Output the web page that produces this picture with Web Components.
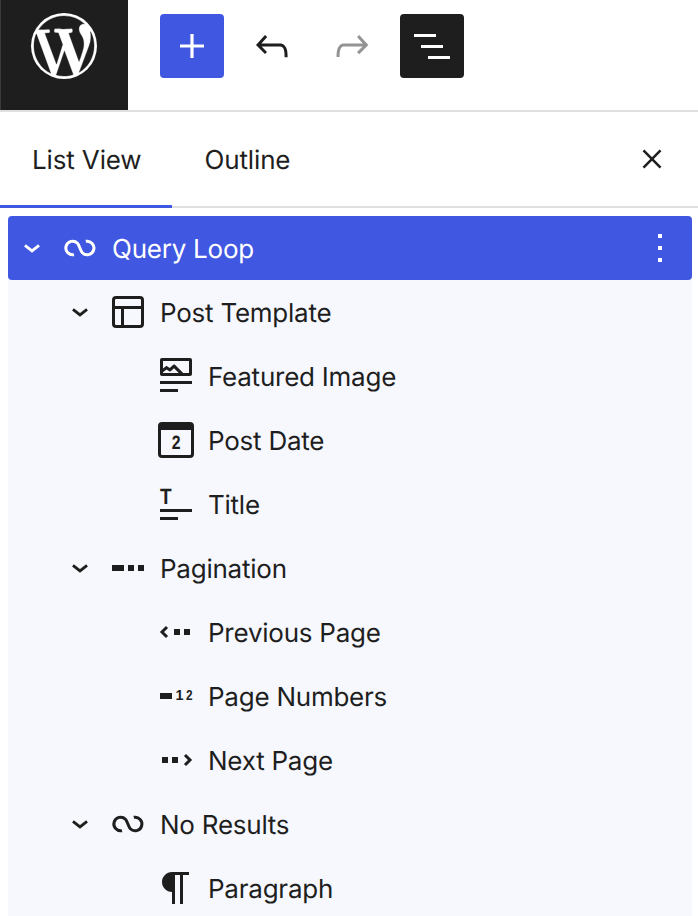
<!DOCTYPE html>
<html>
<head>
<meta charset="utf-8">
<style>
  html, body { margin: 0; height: 100%; overflow: hidden; background: #fff; }
  body { font-family: Inter, "Liberation Sans", sans-serif; color: #1e1e1e; text-rendering: geometricPrecision; letter-spacing: -0.24px; }
</style>
</head>
<body>
<editor-toolbar>
  <tool-button icon="plus" variant="primary"></tool-button>
  <tool-button icon="undo"></tool-button>
  <tool-button icon="redo" variant="disabled"></tool-button>
  <tool-button icon="listview" variant="dark"></tool-button>
</editor-toolbar>
<panel-tabs>
  <tab-item active>List View</tab-item>
  <tab-item>Outline</tab-item>
</panel-tabs>
<block-list>
  <block-row level="1" icon="loop" expanded selected>Query Loop</block-row>
  <block-row level="2" icon="layout" expanded>Post Template</block-row>
  <block-row level="3" icon="image">Featured Image</block-row>
  <block-row level="3" icon="date">Post Date</block-row>
  <block-row level="3" icon="title">Title</block-row>
  <block-row level="2" icon="pagination" expanded>Pagination</block-row>
  <block-row level="3" icon="previous">Previous Page</block-row>
  <block-row level="3" icon="numbers">Page Numbers</block-row>
  <block-row level="3" icon="next">Next Page</block-row>
  <block-row level="2" icon="loop" expanded>No Results</block-row>
  <block-row level="3" icon="paragraph">Paragraph</block-row>
</block-list>

<script>
  const digit = 'font-family="Liberation Sans" font-weight="700"';
  // all icons are on the 24 unit grid
  const ICONS = {
    plus: '<path d="M18 11.2h-5.2V6h-1.6v5.2H6v1.6h5.2V18h1.6v-5.2H18z"/>',
    undo: '<path d="M18.3 11.7c-.6-.6-1.4-.9-2.3-.9H6.7l2.9-3.3-1.1-1-4.5 5L8.5 16l1-1-2.7-2.7H16c.5 0 .9.2 1.3.5 1 1 1 3.4 1 4.5v.3h1.5v-.2c0-1.5 0-4.3-1.5-5.7z"/>',
    redo: '<path d="M15.6 6.5l-1.1 1 2.9 3.3H8c-.9 0-1.7.3-2.3.9-1.4 1.5-1.4 4.2-1.4 5.6v.2h1.5v-.3c0-1.1 0-3.5 1-4.5.3-.3.7-.5 1.3-.5h9.2L14.5 15l1.1 1.1 4.6-4.6-4.6-5z"/>',
    listview: '<path d="M3 6h11v1.5H3V6Zm3.5 5.5h11V13h-11v-1.5ZM21 17H10v1.5h11V17Z"/>',
    close: '<path fill="none" stroke="currentColor" stroke-width="1.9" d="M5.6 5.6L18.4 18.4M18.4 5.6L5.6 18.4"/>',
    chevron: '<path fill="none" stroke="currentColor" stroke-width="2.1" d="M6.7 10L12 14.2L17.3 10"/>',
    more: '<path d="M13 19h-2v-2h2v2zm0-6h-2v-2h2v2zm0-6h-2V5h2v2z"/>',
    loop: '<path fill="none" stroke="currentColor" stroke-width="1.5" d="M9 15.33A3.4 3.4 0 1 1 10.75 9.6C11.6 10.45 12.3 13.55 13.15 14.4A3.4 3.4 0 1 0 14.9 8.67"/>',
    layout: '<path d="M18 5.5H6a.5.5 0 00-.5.5v3h13V6a.5.5 0 00-.5-.5zm.5 5H10v8h8a.5.5 0 00.5-.5v-7.5zm-10 0h-3V18a.5.5 0 00.5.5h2.5v-8zM6 4h12a2 2 0 012 2v12a2 2 0 01-2 2H6a2 2 0 01-2-2V6a2 2 0 012-2z"/>',
    image: '<path d="M19 3H5c-.6 0-1 .4-1 1v7c0 .5.4 1 1 1h14c.5 0 1-.4 1-1V4c0-.6-.4-1-1-1zM5.5 10.5v-.4l1.8-1.3 1.3.8c.3.2.7.2.9-.1L11 8.1l2.4 2.4H5.5zm13 0h-2.9l-4-4c-.3-.3-.8-.3-1.1 0L8.9 8l-1.2-.8c-.3-.2-.6-.2-.9 0l-1.3 1V4.5h13v6zM4 20h9v-1.5H4V20zm0-4h16v-1.5H4V16z"/>',
    date: `<path d="M19.5 7h-15v12a.5.5 0 00.5.5h14a.5.5 0 00.5-.5V7zM3 7V5a2 2 0 012-2h14a2 2 0 012 2v14a2 2 0 01-2 2H5a2 2 0 01-2-2V7z"/><text x="9.9" y="16.7" font-size="9.6" textLength="4.2" lengthAdjust="spacingAndGlyphs" ${digit}>2</text>`,
    title: `<text x="4" y="12" font-size="11" textLength="5.6" lengthAdjust="spacingAndGlyphs" ${digit}>T</text><path d="M4 14.5h16V16H4zM4 18.5h9V20H4z"/>`,
    pagination: '<path d="M4 13.5h6v-3H4v3zm8 0h3v-3h-3v3zm5-3v3h3v-3h-3z"/>',
    previous: '<path d="M16 10.5v3h3v-3h-3zm-5 3h3v-3h-3v3z"/><path fill="none" stroke="currentColor" stroke-width="1.5" d="M7.5 9.5L5 12l2.5 2.5"/>',
    numbers: `<path d="M4 13.5h6v-3H4v3z"/><text x="11.8" y="14" font-size="7.2" ${digit}>1</text><text x="17" y="14" font-size="7.2" textLength="3.1" lengthAdjust="spacingAndGlyphs" ${digit}>2</text>`,
    next: '<path d="M5 13.5h3v-3H5v3zm5 0h3v-3h-3v3z"/><path fill="none" stroke="currentColor" stroke-width="1.5" d="M16.5 9.5L19 12l-2.5 2.5"/>',
    paragraph: '<path d="m9.99609 14v-.2251l.00391.0001v6.225h1.5v-14.5h2.5v14.5h1.5v-14.5h3v-1.5h-8.50391c-2.76142 0-5 2.23858-5 5 0 2.7614 2.23858 5 5 5z"/>'
  };

  class BlockIcon extends HTMLElement {
    constructor () {
      super();
      this.attachShadow({mode: 'open'});
    }
    connectedCallback () {
      const size = this.getAttribute('size') || 48;
      this.shadowRoot.innerHTML = `
        <style>
          :host { display: block; width: ${size}px; height: ${size}px; flex: none; }
          svg { display: block; fill: currentColor; }
        </style>
        <svg width="${size}" height="${size}" viewBox="0 0 24 24">${ICONS[this.getAttribute('name')]}</svg>`;
    }
  }
  customElements.define('block-icon', BlockIcon);

  class ToolButton extends HTMLElement {
    constructor () {
      super();
      this.attachShadow({mode: 'open'});
    }
    connectedCallback () {
      this.shadowRoot.innerHTML = `
        <style>
          :host { display: flex; width: 64px; height: 64px; align-items: center; justify-content: center; border-radius: 4px; color: #1e1e1e; }
          :host([variant="primary"]) { background: #3f57e1; color: #fff; }
          :host([variant="dark"]) { background: #1e1e1e; color: #fff; }
          :host([variant="disabled"]) { color: #949494; }
        </style>
        <block-icon name="${this.getAttribute('icon')}"></block-icon>`;
    }
  }
  customElements.define('tool-button', ToolButton);

  const toolbarTemplate = document.createElement('template');
  toolbarTemplate.innerHTML = `
    <style>
      :host { display: flex; height: 110px; border-bottom: 2px solid #e0e0e0; background: #fff; }
      .logo { width: 128px; height: 110px; flex: none; background: #1e1e1e; box-shadow: inset 1px 0 #3a3a3a; display: flex; justify-content: center; padding-top: 13px; box-sizing: border-box; }
      .logo svg { display: block; }
      .tools { display: flex; gap: 16px; padding: 14px 0 0 32px; }
    </style>
    <div class="logo">
      <svg width="66" height="66" viewBox="0 0 20 20">
        <circle cx="10" cy="10" r="10" fill="#fff"/>
        <path fill="#1e1e1e" stroke="#1e1e1e" stroke-width=".1" transform="translate(10 10) scale(1.025) translate(-10 -10)" d="M7.78 15.37L4.37 6.22c.55-.02 1.17-.08 1.17-.08.5-.06.44-1.13-.06-1.11 0 0-1.45.11-2.37.11-.18 0-.37 0-.58-.01C4.12 2.69 6.87 1.11 10 1.11c2.33 0 4.45.87 6.05 2.34-.68-.11-1.65.39-1.65 1.58 0 .74.45 1.36.9 2.1.35.61.55 1.36.55 2.46 0 1.49-1.4 5-1.4 5l-3.03-8.37c.54-.02.82-.17.82-.17.5-.05.44-1.25-.06-1.22 0 0-1.44.12-2.38.12-.87 0-2.33-.12-2.33-.12-.5-.03-.56 1.2-.06 1.22l.92.08 1.26 3.41zM17.41 10c.24-.64.74-1.87.43-4.25.7 1.29 1.05 2.71 1.05 4.25 0 3.29-1.73 6.24-4.4 7.78.97-2.59 1.94-5.2 2.92-7.78zM6.1 18.09C3.12 16.65 1.11 13.53 1.11 10c0-1.3.23-2.48.72-3.59C3.25 10.3 4.67 14.2 6.1 18.09zm4.03-6.63l2.58 6.98c-.86.29-1.76.45-2.71.45-.79 0-1.57-.11-2.29-.33.81-2.38 1.62-4.74 2.42-7.1z"/>
      </svg>
    </div>
    <div class="tools"><slot></slot></div>`;

  class EditorToolbar extends HTMLElement {
    constructor () {
      super();
      this.attachShadow({mode: 'open'}).appendChild(toolbarTemplate.content.cloneNode(true));
    }
  }
  customElements.define('editor-toolbar', EditorToolbar);

  const tabsTemplate = document.createElement('template');
  tabsTemplate.innerHTML = `
    <style>
      :host { display: flex; height: 96px; box-sizing: border-box; align-items: stretch; border-bottom: 2px solid #e0e0e0; background: #fff; }
      .tabs { display: flex; flex: 1; margin-bottom: -2px; }
      .close { display: flex; align-items: center; padding: 0 30px 0 0; }
    </style>
    <div class="tabs"><slot></slot></div>
    <div class="close"><block-icon name="close" size="32"></block-icon></div>`;

  class PanelTabs extends HTMLElement {
    constructor () {
      super();
      this.attachShadow({mode: 'open'}).appendChild(tabsTemplate.content.cloneNode(true));
    }
  }
  customElements.define('panel-tabs', PanelTabs);

  const tabTemplate = document.createElement('template');
  tabTemplate.innerHTML = `
    <style>
      :host { display: flex; align-items: center; padding: 4px 31px 0 32px; height: 96px; box-sizing: border-box; font-size: 26px; letter-spacing: -0.14px; border-bottom: 3px solid transparent; }
      :host([active]) { border-bottom-color: #3f57e1; }
    </style>
    <slot></slot>`;

  class TabItem extends HTMLElement {
    constructor () {
      super();
      this.attachShadow({mode: 'open'}).appendChild(tabTemplate.content.cloneNode(true));
    }
  }
  customElements.define('tab-item', TabItem);

  const listTemplate = document.createElement('template');
  listTemplate.innerHTML = `
    <style>
      :host { display: block; margin: 8px 6px 0 8px; background: #f6f8fd; border-radius: 4px; }
    </style>
    <slot></slot>`;

  class BlockList extends HTMLElement {
    constructor () {
      super();
      this.attachShadow({mode: 'open'}).appendChild(listTemplate.content.cloneNode(true));
    }
  }
  customElements.define('block-list', BlockList);

  class BlockRow extends HTMLElement {
    constructor () {
      super();
      this.attachShadow({mode: 'open'});
    }
    connectedCallback () {
      const level = Number(this.getAttribute('level'));
      const selected = this.hasAttribute('selected');
      this.shadowRoot.innerHTML = `
        <style>
          :host { display: flex; height: 64px; align-items: center; gap: 8px; padding-left: ${8 + 48 * (level - 1)}px; font-size: 26px; border-radius: 4px; }
          :host([selected]) { background: #3f57e1; color: #fff; }
          .toggle { width: 32px; height: 32px; flex: none; }
          .label { flex: 1; padding-top: 2px; }
          .more { margin-right: 8px; }
        </style>
        <div class="toggle">${this.hasAttribute('expanded') ? '<block-icon name="chevron" size="32"></block-icon>' : ''}</div>
        <block-icon name="${this.getAttribute('icon')}"></block-icon>
        <div class="label"><slot></slot></div>
        ${selected ? '<block-icon class="more" name="more"></block-icon>' : ''}`;
    }
  }
  customElements.define('block-row', BlockRow);
</script>
</body>
</html>
